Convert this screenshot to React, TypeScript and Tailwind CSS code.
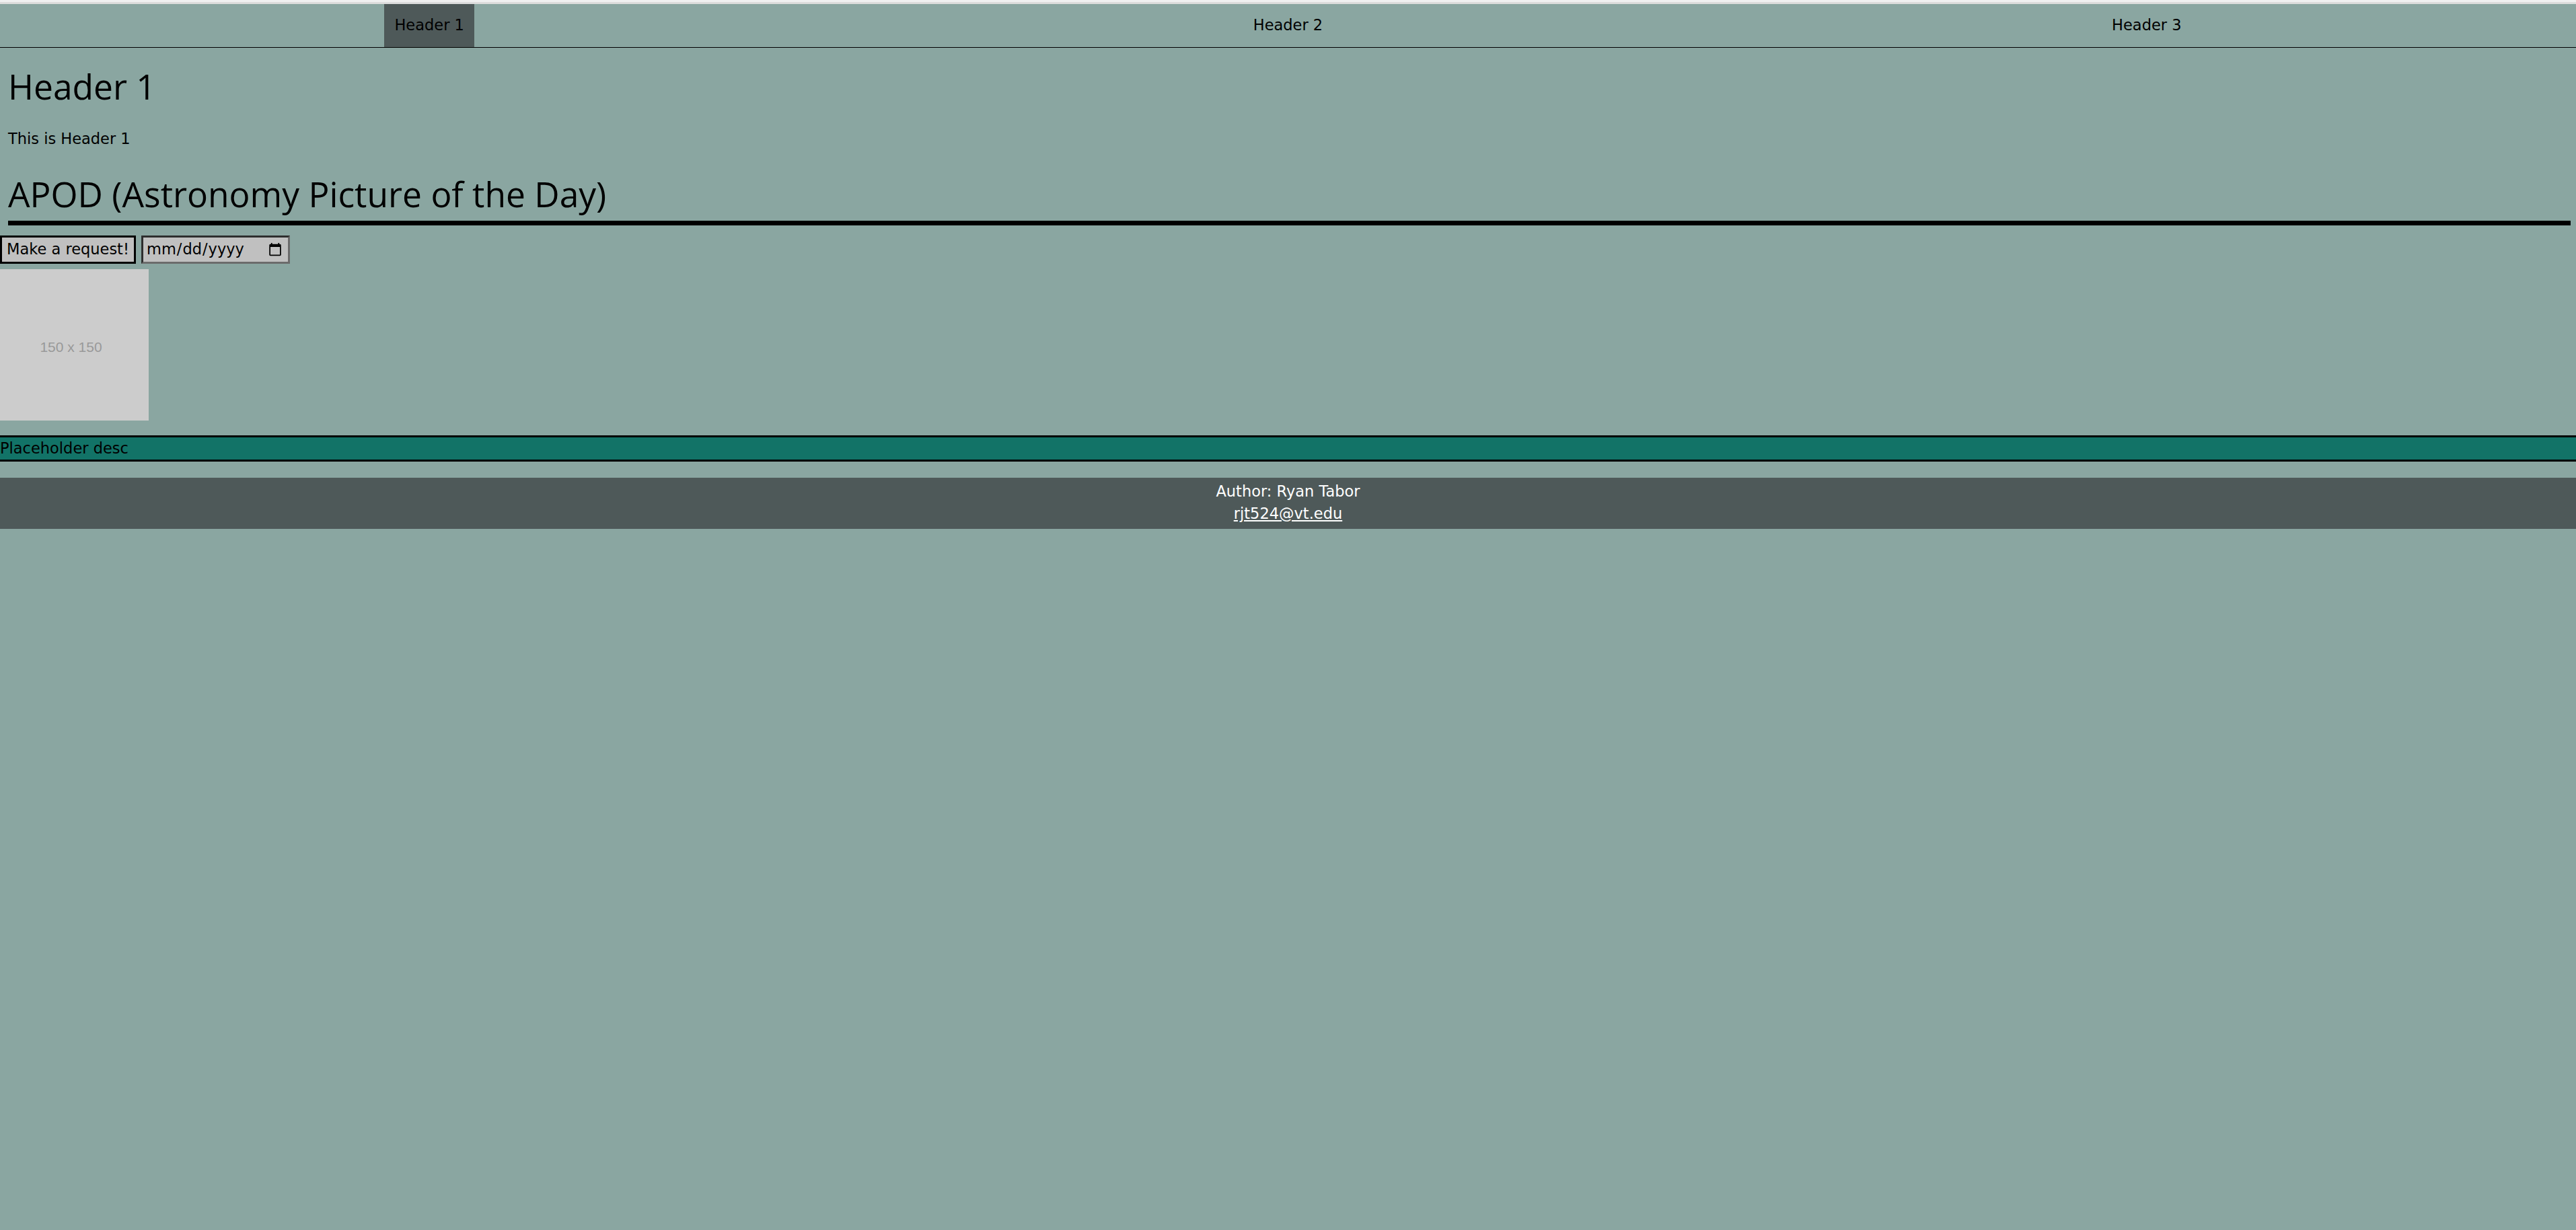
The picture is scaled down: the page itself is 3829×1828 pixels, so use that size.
const tabs = ["Header 1", "Header 2", "Header 3"];

export default function App() {
  const active = 0;

  return (
    <div className="min-h-screen bg-[#8aa6a1] font-['DejaVu_Sans',Verdana,sans-serif] text-[22.5px] text-black">
      <div className="h-[3px] bg-[#f0f0f0]" />
      <div className="h-[3px] bg-[#dcdcdc]" />

      <nav className="flex h-[65px] border-b border-black">
        {tabs.map((tab, i) => (
          <div key={tab} className="flex flex-1 justify-center">
            <span className={`flex h-full items-center px-[15px] ${i === active ? "bg-[#4e5959]" : ""}`}>{tab}</span>
          </div>
        ))}
      </nav>

      <section className="pl-[12px]">
        <h1 className="mt-[27px] font-['Open_Sans',sans-serif] text-[51.5px] font-normal leading-[60px]">Header 1</h1>
        <p className="mt-[32px]">This is Header 1</p>
      </section>

      <h2 className="ml-[12px] mr-[8px] mt-[34px] border-b-[7px] border-black pb-[10px] font-['Open_Sans',sans-serif] text-[51.5px] font-normal leading-[60px]">
        APOD (Astronomy Picture of the Day)
      </h2>

      <div className="mt-[15px] flex gap-[8px]">
        <button className="flex h-[42px] w-[202px] items-center justify-center border-[3px] border-black bg-[#c0c0c0] text-[22.5px]">
          Make a request!
        </button>
        <input
          type="date"
          className="h-[42px] w-[221px] border-[3px] border-t-[#2e2e2e] border-l-[#2e2e2e] border-b-[#6b6b6b] border-r-[#6b6b6b] bg-[#c0c0c0] pl-[4px] pr-[6px] font-['DejaVu_Sans',sans-serif] text-[22.5px] text-black"
        />
      </div>

      <div className="mt-[8px] flex h-[225px] w-[221px] items-center justify-center bg-[#cccccc] pr-[10px] pt-[6px] font-['Liberation_Sans',Arial,sans-serif] text-[21px] text-[#999999]">
        150 x 150
      </div>

      <div className="mt-[22px] h-[39px] border-y-[3px] border-black bg-[#127367] leading-[33px]">Placeholder desc</div>

      <footer className="mt-[24px] flex h-[76px] flex-col items-center bg-[#4e5959] pt-[4px] leading-[33px] text-white">
        <span>Author: Ryan Tabor</span>
        <a href="mailto:rjt524@vt.edu" className="underline">rjt524@vt.edu</a>
      </footer>
    </div>
  );
}
